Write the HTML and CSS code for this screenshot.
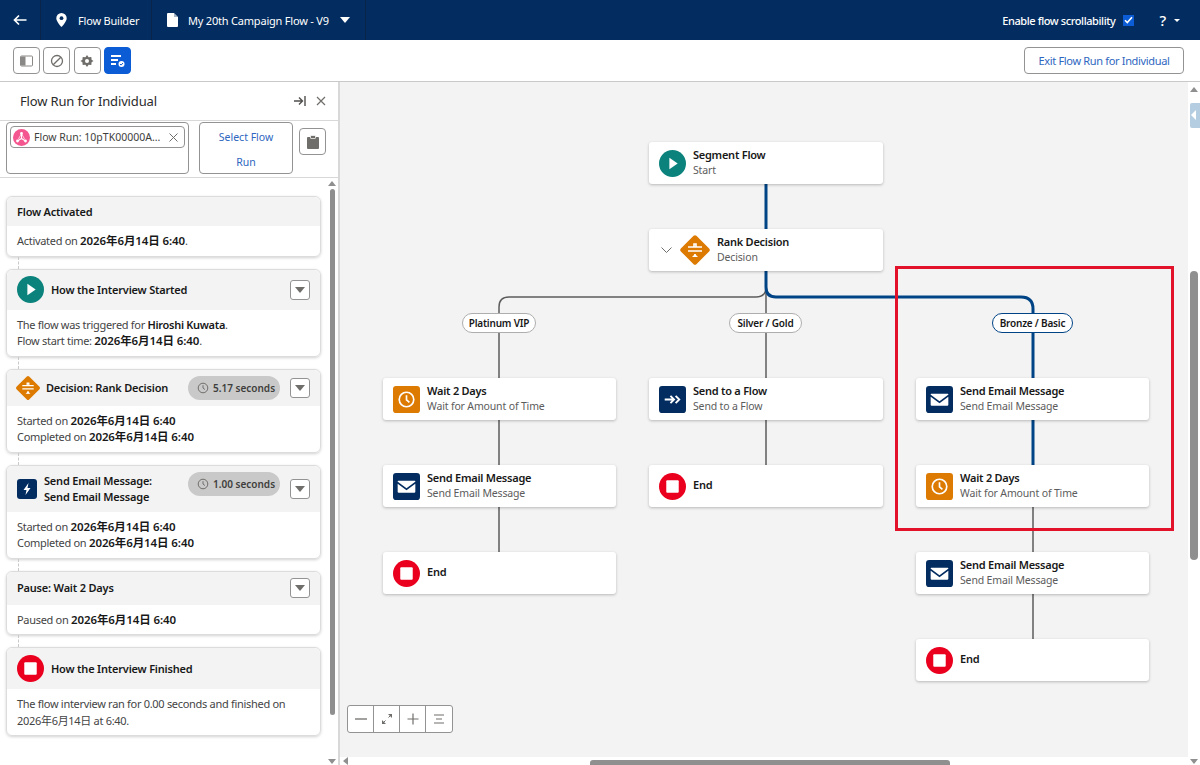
FILE: index.html
```html
<!DOCTYPE html>
<html lang="en">
<head>
    <meta charset="UTF-8">
    <title>Flow Builder</title>
    <link rel="stylesheet" href="styles.css">
</head>
<body>
<svg class="defs" width="0" height="0">
    <symbol id="i-play" viewBox="0 0 26 26"><circle cx="13" cy="13" r="13" fill="#0b827c"/><path d="M10 7.500l8 5.500-8 5.500z" fill="#fff"/></symbol>
    <symbol id="i-stop" viewBox="0 0 26 26"><circle cx="13" cy="13" r="13" fill="#ea001e"/><rect x="7" y="7" width="12" height="12" rx="1" fill="#fff"/></symbol>
    <symbol id="i-decision" viewBox="0 0 32 32"><rect x="5" y="5" width="22" height="22" rx="2" transform="rotate(45 16 16)" fill="#dd7a01"/><path d="M9 13h14M15 13v-3h2v3M9 17h14M16 20v3" stroke="#fff" stroke-width="1.600" fill="none"/><path d="M13 23l3-3 3 3z" fill="#fff"/></symbol>
    <symbol id="i-clock" viewBox="0 0 26 26"><rect width="26" height="26" rx="3" fill="#dd7a01"/><circle cx="13" cy="13" r="7" fill="none" stroke="#fff" stroke-width="1.600"/><path d="M13 9v4.400l2.800 2.400" fill="none" stroke="#fff" stroke-width="1.600"/></symbol>
    <symbol id="i-mail" viewBox="0 0 26 26"><rect width="26" height="26" rx="3" fill="#032d60"/><path d="M5 7.500h16a.6.6 0 0 1 .4 1L13 14.600 4.600 8.500a.6.6 0 0 1 .4-1z" fill="#fff"/><path d="M4.500 10.400L13 16.500l8.500-6.100V18a1 1 0 0 1-1 1h-15a1 1 0 0 1-1-1z" fill="#fff"/></symbol>
    <symbol id="i-send" viewBox="0 0 26 26"><rect width="26" height="26" rx="3" fill="#032d60"/><path d="M5.500 13h9M11 9.500l3.500 3.500-3.500 3.500M16 9.500l3.500 3.500-3.500 3.500" fill="none" stroke="#fff" stroke-width="1.800"/></symbol>
    <symbol id="i-bolt" viewBox="0 0 20 20"><rect width="20" height="20" rx="3" fill="#032d60"/><path d="M11.500 4L6.500 11h3l-1 5 5-7h-3z" fill="#fff"/></symbol>
    <symbol id="i-timer" viewBox="0 0 12 12"><circle cx="6" cy="6" r="4.800" fill="none" stroke="#706e6b" stroke-width="1"/><path d="M6 3.200V6l1.900 1.500" fill="none" stroke="#706e6b" stroke-width="1"/></symbol>
</svg>

<header class="top_bar">
    <a class="top_cell back_cell">
        <svg width="14" height="12" viewBox="0 0 14 12"><path d="M13.500 6H1.500M6 1.500L1.500 6 6 10.500" fill="none" stroke="#fff" stroke-width="1.700"/></svg>
    </a>
    <div class="top_cell app_cell">
        <svg width="11" height="14" viewBox="0 0 11 14"><path d="M5.500 0A5.200 5.200 0 0 0 .3 5.200C.3 8.700 5.500 14 5.500 14s5.200-5.300 5.200-8.800A5.200 5.200 0 0 0 5.500 0z" fill="#fff"/><circle cx="5.500" cy="5.200" r="1.900" fill="#032d60"/></svg>
        <span>Flow Builder</span>
    </div>
    <div class="top_cell file_cell">
        <svg width="11" height="14" viewBox="0 0 11 14"><path d="M1 0h6l4 4v9a1 1 0 0 1-1 1H1a1 1 0 0 1-1-1V1a1 1 0 0 1 1-1z" fill="#fff"/><path d="M7 0v4h4" fill="#032d60" opacity=".35"/></svg>
        <span>My 20th Campaign Flow - V9</span>
        <i class="caret caret_white"></i>
    </div>
    <div class="top_right">
        <span class="scroll_label">Enable flow scrollability</span>
        <span class="check_box">
            <svg width="9" height="8" viewBox="0 0 9 8"><path d="M1 4.200l2.300 2.300L8 1.200" fill="none" stroke="#fff" stroke-width="1.600"/></svg>
        </span>
        <span class="help_mark">?</span>
        <i class="caret caret_small"></i>
    </div>
</header>

<div class="tool_bar">
    <div class="tool_group">
        <button class="tool_btn">
            <svg width="14" height="12" viewBox="0 0 14 12"><rect x=".5" y="1" width="12" height="10" rx="1" fill="none" stroke="#8a8886"/><rect x="1" y="1.500" width="4.500" height="9" fill="#8a8886"/></svg>
        </button>
        <button class="tool_btn">
            <svg width="14" height="14" viewBox="0 0 14 14"><circle cx="7" cy="7" r="5.500" fill="none" stroke="#706e6b" stroke-width="1.300"/><path d="M3.200 10.800l7.600-7.600" stroke="#706e6b" stroke-width="1.300"/></svg>
        </button>
        <button class="tool_btn">
            <svg width="14" height="14" viewBox="0 0 14 14"><path d="M7 1l1.600 2.200 2.700-.2.300 2.700L13.500 7l-1.900 1.300-.3 2.700-2.700-.2L7 13l-1.600-2.200-2.700.2-.3-2.700L.5 7l1.900-1.300.3-2.700 2.700.2z" fill="#706e6b"/><circle cx="7" cy="7" r="2" fill="#fff"/></svg>
        </button>
        <button class="tool_btn tool_btn_on">
            <svg width="16" height="14" viewBox="0 0 16 14"><path d="M1 2h10M1 6h7M1 10h5" stroke="#fff" stroke-width="1.800" fill="none"/><circle cx="11.500" cy="10" r="3" fill="#fff"/><path d="M10 10l1.100 1.100L13 9" stroke="#0b5cd5" stroke-width="1" fill="none"/></svg>
        </button>
    </div>
    <button class="exit_btn">Exit Flow Run for Individual</button>
</div>

<div class="main">
    <aside class="panel">
        <div class="panel_head">
            <span class="panel_title">Flow Run for Individual</span>
            <svg width="12" height="10" viewBox="0 0 12 10"><path d="M0 5h8M5 1.500L8.500 5 5 8.500M11 0v10" fill="none" stroke="#514f4d" stroke-width="1.400"/></svg>
            <svg class="panel_close" width="10" height="10" viewBox="0 0 10 10"><path d="M1 1l8 8M9 1l-8 8" stroke="#706e6b" stroke-width="1.200"/></svg>
        </div>
        <div class="search_row">
            <div class="search_box">
                <div class="pill">
                    <svg class="pill_icon" width="17" height="17" viewBox="0 0 17 17"><circle cx="8.500" cy="8.500" r="8.500" fill="#f4578f"/><path d="M8.500 4.500V9.500L4.500 12M8.500 9.500L12.500 12" fill="none" stroke="#fff" stroke-width="1.100"/><path d="M8.500 4.500L5.500 10M8.500 4.500L11.500 10" fill="none" stroke="#fff" stroke-width=".7"/><circle cx="8.500" cy="4.500" r="1.400" fill="#fff"/><circle cx="4.500" cy="12" r="1.400" fill="#fff"/><circle cx="12.500" cy="12" r="1.400" fill="#fff"/></svg>
                    <span class="pill_text">Flow Run: 10pTK00000A...</span>
                    <svg width="9" height="9" viewBox="0 0 9 9"><path d="M.5.500l8 8M8.500.500l-8 8" stroke="#706e6b" stroke-width="1"/></svg>
                </div>
            </div>
            <button class="select_btn">Select Flow<br>Run</button>
            <button class="clip_btn">
                <svg width="12" height="14" viewBox="0 0 12 14"><path d="M1 2h10a1 1 0 0 1 1 1v10a1 1 0 0 1-1 1H1a1 1 0 0 1-1-1V3a1 1 0 0 1 1-1z" fill="#706e6b"/><rect x="3.500" y=".5" width="5" height="3" rx=".5" fill="#706e6b" stroke="#fff" stroke-width=".7"/></svg>
            </button>
        </div>
        <div class="cards_wrap">
            <div class="cards">
                <section class="card">
                    <div class="card_head head_a"><b class="card_title">Flow Activated</b></div>
                    <div class="card_body">Activated on <b class="date">2026年6月14日 6:40</b>.</div>
                </section>
                <section class="card">
                    <div class="card_head head_b">
                        <svg class="card_icon" width="27" height="27"><use href="#i-play"/></svg>
                        <b class="card_title">How the Interview Started</b>
                        <button class="drop_btn"><i class="caret caret_gray"></i></button>
                    </div>
                    <div class="card_body">The flow was triggered for <b>Hiroshi Kuwata</b>.<br>Flow start time: <b class="date">2026年6月14日 6:40</b>.</div>
                </section>
                <section class="card">
                    <div class="card_head head_c">
                        <svg class="card_icon icon_decision" width="26" height="26"><use href="#i-decision"/></svg>
                        <b class="card_title">Decision: Rank Decision</b>
                        <span class="time_pill"><svg width="12" height="12"><use href="#i-timer"/></svg>5.17 seconds</span>
                        <button class="drop_btn"><i class="caret caret_gray"></i></button>
                    </div>
                    <div class="card_body">Started on <b class="date">2026年6月14日 6:40</b><br>Completed on <b class="date">2026年6月14日 6:40</b></div>
                </section>
                <section class="card">
                    <div class="card_head head_d">
                        <svg class="card_icon" width="20" height="20"><use href="#i-bolt"/></svg>
                        <b class="card_title">Send Email Message:<br>Send Email Message</b>
                        <span class="time_pill time_pill_top"><svg width="12" height="12"><use href="#i-timer"/></svg>1.00 seconds</span>
                        <button class="drop_btn"><i class="caret caret_gray"></i></button>
                    </div>
                    <div class="card_body">Started on <b class="date">2026年6月14日 6:40</b><br>Completed on <b class="date">2026年6月14日 6:40</b></div>
                </section>
                <section class="card">
                    <div class="card_head head_e">
                        <b class="card_title">Pause: Wait 2 Days</b>
                        <button class="drop_btn"><i class="caret caret_gray"></i></button>
                    </div>
                    <div class="card_body">Paused on <b class="date">2026年6月14日 6:40</b></div>
                </section>
                <section class="card">
                    <div class="card_head head_f">
                        <svg class="card_icon" width="27" height="27"><use href="#i-stop"/></svg>
                        <b class="card_title">How the Interview Finished</b>
                    </div>
                    <div class="card_body">The flow interview ran for 0.00 seconds and finished on<br>2026年6月14日 at 6:40.</div>
                </section>
            </div>
            <div class="panel_scroll">
                <i class="arrow_up"></i>
                <div class="panel_thumb"></div>
                <i class="arrow_down"></i>
            </div>
        </div>
    </aside>

    <div class="canvas_wrap">
        <div class="canvas">
            <svg class="wires" width="848" height="675" viewBox="0 0 848 675">
                <g fill="none" stroke="#5c5c5c" stroke-width="1.500">
                    <path d="M426 205Q426 215 416 215H169Q159 215 159 225V296"/>
                    <path d="M426 205V296"/>
                    <path d="M159 338V383M159 425V470M426 338V383M693 425V470M693 512V557"/>
                </g>
                <g fill="none" stroke="#014486" stroke-width="3">
                    <path d="M426 101V147M426 189V205Q426 215 436 215H681Q693 215 693 227V296M693 338V383"/>
                </g>
            </svg>

            <span class="tag col_a_tag">Platinum VIP</span>
            <span class="tag col_b_tag">Silver / Gold</span>
            <span class="tag tag_on col_c_tag">Bronze / Basic</span>

            <div class="node col_b row_0">
                <svg width="27" height="27"><use href="#i-play"/></svg>
                <div><div class="node_title">Segment Flow</div><div class="node_sub">Start</div></div>
            </div>
            <div class="node node_decision col_b row_1">
                <svg width="11" height="7" viewBox="0 0 11 7"><path d="M.5.500l5 5 5-5" fill="none" stroke="#706e6b" stroke-width="1"/></svg>
                <svg width="32" height="32"><use href="#i-decision"/></svg>
                <div><div class="node_title">Rank Decision</div><div class="node_sub">Decision</div></div>
            </div>

            <div class="node col_a row_2">
                <svg width="27" height="27"><use href="#i-clock"/></svg>
                <div><div class="node_title">Wait 2 Days</div><div class="node_sub">Wait for Amount of Time</div></div>
            </div>
            <div class="node col_a row_3">
                <svg width="27" height="27"><use href="#i-mail"/></svg>
                <div><div class="node_title">Send Email Message</div><div class="node_sub">Send Email Message</div></div>
            </div>
            <div class="node col_a row_4">
                <svg width="27" height="27"><use href="#i-stop"/></svg>
                <div class="node_title">End</div>
            </div>

            <div class="node col_b row_2">
                <svg width="27" height="27"><use href="#i-send"/></svg>
                <div><div class="node_title">Send to a Flow</div><div class="node_sub">Send to a Flow</div></div>
            </div>
            <div class="node col_b row_3">
                <svg width="27" height="27"><use href="#i-stop"/></svg>
                <div class="node_title">End</div>
            </div>

            <div class="node col_c row_2">
                <svg width="27" height="27"><use href="#i-mail"/></svg>
                <div><div class="node_title">Send Email Message</div><div class="node_sub">Send Email Message</div></div>
            </div>
            <div class="node col_c row_3">
                <svg width="27" height="27"><use href="#i-clock"/></svg>
                <div><div class="node_title">Wait 2 Days</div><div class="node_sub">Wait for Amount of Time</div></div>
            </div>
            <div class="node col_c row_4">
                <svg width="27" height="27"><use href="#i-mail"/></svg>
                <div><div class="node_title">Send Email Message</div><div class="node_sub">Send Email Message</div></div>
            </div>
            <div class="node col_c row_5">
                <svg width="27" height="27"><use href="#i-stop"/></svg>
                <div class="node_title">End</div>
            </div>

            <div class="highlight"></div>

            <div class="zoom_box">
                <button class="zoom_btn"><svg width="14" height="2" viewBox="0 0 14 2"><path d="M1 1h12" stroke="#706e6b" stroke-width="1.300"/></svg></button>
                <button class="zoom_btn"><svg width="12" height="12" viewBox="0 0 12 12"><path d="M7 1h4v4zM5 11H1V7z" fill="#706e6b"/><path d="M9 3L7.500 4.500M3 9l1.500-1.500" stroke="#706e6b"/></svg></button>
                <button class="zoom_btn"><svg width="12" height="12" viewBox="0 0 12 12"><path d="M6 .5v11M.5 6h11" stroke="#706e6b" stroke-width="1.200"/></svg></button>
                <button class="zoom_btn"><svg width="12" height="10" viewBox="0 0 12 10"><path d="M1 1h10M3 5h6M1 9h10" stroke="#706e6b" stroke-width="1.200"/></svg></button>
            </div>
        </div>
        <div class="v_scroll">
            <i class="arrow_up"></i>
            <div class="side_tab"><i></i></div>
            <div class="v_thumb"></div>
            <i class="arrow_down"></i>
        </div>
        <div class="h_scroll">
            <i class="arrow_left"></i>
            <div class="h_thumb"></div>
        </div>
    </div>
</div>
</body>
</html>
```
FILE: styles.css
```css
html, body {
    height: 100%;
    margin: 0;
    overflow: hidden;
    font-family: "Noto Sans", "Noto Sans CJK JP", sans-serif;
    font-size: 11px;
    color: #181818;
    background-color: #fff;
}

button {
    font-family: inherit;
    padding: 0;
    background-color: #fff;
}

svg {
    display: block;
    flex: none;
}

.defs {
    position: absolute;
}

.caret {
    display: block;
    width: 0;
    height: 0;
    border-style: solid;
    border-color: transparent;
    border-bottom-width: 0;
}

.caret_white {
    border-width: 6px 5px 0;
    border-top-color: #fff;
}

.caret_small {
    border-width: 3px 3px 0;
    border-top-color: #fff;
    margin-left: 8px;
}

.caret_gray {
    border-width: 6px 5px 0;
    border-top-color: #706e6b;
    margin: 0 auto;
}

/* top bar */
.top_bar {
    height: 40px;
    background-color: #032d60;
    color: #fff;
    display: flex;
    align-items: stretch;
    letter-spacing: -0.2px;
}

.top_cell {
    display: flex;
    align-items: center;
    border-right: 1px solid #0a2447;
}

.back_cell {
    width: 41px;
    box-sizing: border-box;
    padding-left: 13px;
}

.app_cell {
    width: 111px;
    box-sizing: border-box;
    padding-left: 15px;
    gap: 11px;
}

.file_cell {
    width: 214px;
    box-sizing: border-box;
    padding-left: 15px;
    gap: 10px;
}

.file_cell .caret {
    margin-left: 1px;
}

.top_right {
    margin-left: auto;
    display: flex;
    align-items: center;
    padding-right: 20px;
}

.scroll_label {
    font-weight: 500;
    letter-spacing: -0.4px;
}

.check_box {
    width: 11px;
    height: 11px;
    margin-left: 8px;
    background-color: #0b5cd5;
    display: flex;
    align-items: center;
    justify-content: center;
}

.help_mark {
    font-size: 15px;
    font-weight: 500;
    margin-left: 25px;
}

/* tool bar */
.tool_bar {
    height: 41px;
    border-bottom: 1px solid #c9c9c9;
    display: flex;
    align-items: center;
    justify-content: space-between;
    padding: 0 16px 0 13px;
}

.tool_group {
    display: flex;
    gap: 3.4px;
}

.tool_btn {
    width: 27px;
    height: 27px;
    border: 1px solid #939393;
    border-radius: 4px;
    display: flex;
    align-items: center;
    justify-content: center;
}

.tool_btn_on {
    background-color: #0b5cd5;
    border-color: #0b5cd5;
}

.exit_btn {
    width: 160px;
    height: 27px;
    border: 1px solid #939393;
    border-radius: 4px;
    color: #2e66c0;
    font-size: 11px;
    letter-spacing: -0.33px;
}

/* left panel */
.main {
    display: flex;
    height: 683px;
}

.panel {
    width: 338px;
    border-right: 2px solid #d8d8d8;
    display: flex;
    flex-direction: column;
}

.panel_head {
    height: 38px;
    border-bottom: 1px solid #d8d8d8;
    display: flex;
    align-items: center;
    padding: 0 12px 0 20px;
}

.panel_title {
    font-size: 13px;
    letter-spacing: -0.15px;
    margin-right: auto;
    color: #2b2b2b;
}

.panel_close {
    margin-left: 10px;
}

.search_row {
    height: 57px;
    border-bottom: 1px solid #d8d8d8;
    padding: 1px 12px 0 6px;
    box-sizing: border-box;
    display: flex;
    align-items: flex-start;
}

.search_box {
    width: 183px;
    height: 52px;
    box-sizing: border-box;
    border: 1px solid #939393;
    border-radius: 4px;
    padding: 3px;
}

.pill {
    height: 22px;
    box-sizing: border-box;
    border: 1px solid #939393;
    border-radius: 4px;
    display: flex;
    align-items: center;
    padding: 0 6px 0 2px;
}

.pill_icon {
    margin-right: 4px;
}

.pill_text {
    flex: 1;
    font-size: 10.5px;
    color: #3e3e3c;
    white-space: nowrap;
}

.select_btn {
    width: 94px;
    height: 52px;
    margin-left: 10px;
    padding-top: 2px;
    border: 1px solid #939393;
    border-radius: 4px;
    color: #2e66c0;
    font-size: 10.5px;
    line-height: 25px;
}

.clip_btn {
    width: 27px;
    height: 27px;
    margin: 6px 0 0 6px;
    border: 1px solid #939393;
    border-radius: 4px;
    display: flex;
    align-items: center;
    justify-content: center;
}

.cards_wrap {
    flex: 1;
    display: flex;
    min-height: 0;
}

.cards {
    width: 315px;
    padding: 18px 0 0 6px;
}

.card {
    position: relative;
    border: 1px solid #dcdcdc;
    border-radius: 6px;
    box-shadow: 0 1px 3px rgba(0, 0, 0, 0.18);
    margin-bottom: 12px;
}

/* dashed link between two cards */
.card + .card:before {
    content: '';
    position: absolute;
    left: 11px;
    top: -13px;
    height: 12px;
    border-left: 1px dashed #c9c9c9;
}

.card_head {
    background-color: #f3f3f3;
    border-radius: 6px 6px 0 0;
    display: flex;
    align-items: center;
    padding: 0 10px;
    box-sizing: border-box;
}

.head_a { height: 29px; }
.head_b { height: 40px; }
.head_c { height: 36px; padding-left: 8px; }
.head_d { height: 46px; }
.head_e { height: 33px; }
.head_f { height: 41px; }

.card_icon {
    margin-right: 7px;
}

.icon_decision {
    margin-right: 5px;
}

.card_title {
    font-weight: 600;
    font-size: 11px;
    letter-spacing: -0.2px;
    line-height: 16px;
    margin-right: auto;
}

.drop_btn {
    width: 20px;
    height: 20px;
    border: 1px solid #939393;
    border-radius: 3px;
    flex: none;
}

.time_pill {
    width: 92px;
    height: 24px;
    box-sizing: border-box;
    background-color: #c9c9c9;
    border-radius: 12px;
    display: flex;
    align-items: center;
    gap: 4px;
    padding-left: 9px;
    margin-right: 10px;
    font-size: 10px;
    font-weight: 600;
    color: #3e3e3c;
}

.time_pill_top {
    align-self: flex-start;
    margin-top: 6px;
}

.card_body {
    padding: 7px 10px 6px;
    line-height: 16.5px;
    color: #444;
    letter-spacing: -0.3px;
    white-space: nowrap;
}

.card_body b {
    color: #181818;
    font-weight: 600;
}

.card_body .date {
    font-size: 11.5px;
    letter-spacing: -0.1px;
}

.panel_scroll {
    width: 12px;
    margin-left: 5px;
    display: flex;
    flex-direction: column;
    align-items: center;
}

.panel_thumb {
    width: 5px;
    height: 526px;
    background-color: #8f8f8f;
    border-radius: 3px;
    margin-top: 3px;
}

.arrow_up, .arrow_down {
    display: block;
    width: 0;
    height: 0;
    border-left: 4px solid transparent;
    border-right: 4px solid transparent;
}

.arrow_up {
    border-bottom: 5px solid #8f8f8f;
    margin-top: 3px;
}

.arrow_down {
    border-top: 5px solid #8f8f8f;
    margin-top: auto;
    margin-bottom: 1px;
}

/* flow canvas */
.canvas_wrap {
    position: relative;
    flex: 1;
}

.canvas {
    position: absolute;
    left: 0;
    top: 0;
    width: 848px;
    height: 675px;
    background-color: #f3f3f3;
    overflow: hidden;
}

.wires {
    position: absolute;
    left: 0;
    top: 0;
}

.node {
    position: absolute;
    width: 234px;
    height: 42px;
    box-sizing: border-box;
    background-color: #fff;
    border-radius: 3px;
    box-shadow: 0 1px 3px rgba(0, 0, 0, 0.25);
    display: flex;
    align-items: center;
    gap: 7px;
    padding-left: 10px;
}

.node_decision {
    padding-left: 12px;
    gap: 6.5px;
}

.node_title {
    font-weight: 600;
    font-size: 11px;
    letter-spacing: -0.25px;
    line-height: 14px;
    color: #181818;
}

.node > .node_title {
    margin-bottom: 3px;
}

.node_sub {
    font-size: 10.5px;
    letter-spacing: -0.15px;
    line-height: 15px;
    margin-top: 1px;
    color: #5c5c5c;
}

.col_a { left: 43px; }
.col_b { left: 309px; }
.col_c { left: 576px; }

.col_a, .col_c { width: 233px; }

.row_0 { top: 60px; }
.row_1 { top: 147px; }
.row_2 { top: 296px; }
.row_3 { top: 383px; }
.row_4 { top: 470px; }
.row_5 { top: 557px; }

.tag {
    position: absolute;
    top: 231px;
    height: 20px;
    box-sizing: border-box;
    border: 1px solid #aeaeae;
    border-radius: 10px;
    background-color: #fff;
    font-size: 10px;
    font-weight: 600;
    letter-spacing: -0.2px;
    line-height: 18px;
    text-align: center;
}

.tag_on {
    border-color: #014486;
}

.col_a_tag { left: 122px; width: 74px; }
.col_b_tag { left: 389px; width: 73px; }
.col_c_tag { left: 652px; width: 81px; }

.highlight {
    position: absolute;
    left: 555px;
    top: 184px;
    width: 279px;
    height: 265px;
    box-sizing: border-box;
    border: 3px solid #e2122b;
}

.zoom_box {
    position: absolute;
    left: 7px;
    top: 623px;
    display: flex;
    border: 1px solid #939393;
    border-radius: 3px;
    background-color: #fff;
}

.zoom_btn {
    width: 26px;
    height: 26px;
    border: none;
    border-right: 1px solid #939393;
    background-color: transparent;
    display: flex;
    align-items: center;
    justify-content: center;
}

.zoom_btn:last-child {
    border-right: none;
}

.v_scroll {
    position: absolute;
    right: 0;
    top: 0;
    width: 12px;
    height: 683px;
    display: flex;
    flex-direction: column;
    align-items: center;
}

.v_scroll .arrow_up {
    margin-top: 5px;
}

.side_tab {
    position: absolute;
    top: 21px;
    left: 2px;
    width: 10px;
    height: 25px;
    background-color: #b5cde0;
    border-radius: 2px 0 0 2px;
}

.side_tab i {
    display: block;
    width: 0;
    height: 0;
    margin: 7px 0 0 1px;
    border: 5px solid transparent;
    border-left: 0;
    border-right-color: #fff;
}

.v_thumb {
    position: absolute;
    left: 2px;
    top: 189px;
    width: 8px;
    height: 289px;
    background-color: #8f8f8f;
    border-radius: 4px;
}

.h_scroll {
    position: absolute;
    left: 0;
    bottom: 0;
    width: 848px;
    height: 8px;
}

.arrow_left {
    position: absolute;
    left: 3px;
    bottom: 0;
    width: 0;
    height: 0;
    border-top: 4px solid transparent;
    border-bottom: 4px solid transparent;
    border-right: 5px solid #8f8f8f;
}

.h_thumb {
    position: absolute;
    left: 250px;
    bottom: 0;
    width: 360px;
    height: 5px;
    background-color: #8f8f8f;
    border-radius: 3px 3px 0 0;
}
```
